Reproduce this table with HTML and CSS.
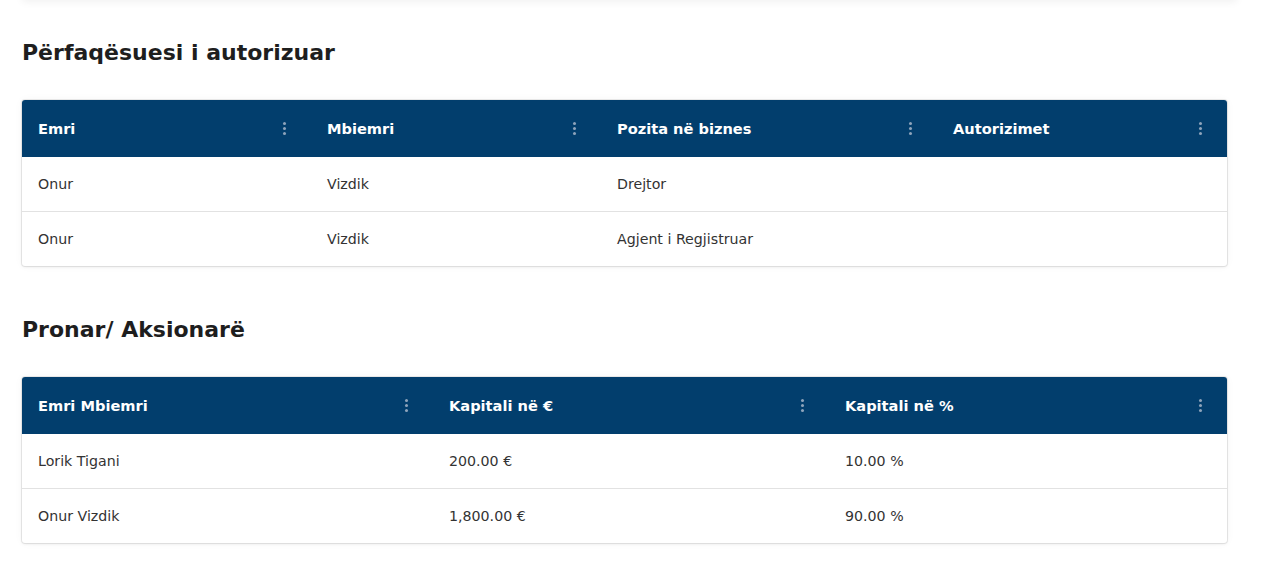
FILE: index.html
```html
<!DOCTYPE html>
<html lang="sq">
<head>
<meta charset="utf-8">
<title>Përfaqësuesi i autorizuar</title>
<link rel="stylesheet" href="styles.css">
</head>
<body>
<div class="page">
  <div class="prev-card"></div>

  <section class="section">
    <h2 class="section-title">Përfaqësuesi i autorizuar</h2>
    <div class="card">
      <div class="grid grid-reps head">
        <div class="cell th"><span>Emri</span><span class="dots"><i></i><i></i><i></i></span></div>
        <div class="cell th"><span>Mbiemri</span><span class="dots"><i></i><i></i><i></i></span></div>
        <div class="cell th"><span>Pozita në biznes</span><span class="dots"><i></i><i></i><i></i></span></div>
        <div class="cell th"><span>Autorizimet</span><span class="dots"><i></i><i></i><i></i></span></div>
      </div>
      <div class="grid grid-reps row">
        <div class="cell">Onur</div>
        <div class="cell">Vizdik</div>
        <div class="cell">Drejtor</div>
        <div class="cell"></div>
      </div>
      <div class="grid grid-reps row last">
        <div class="cell">Onur</div>
        <div class="cell">Vizdik</div>
        <div class="cell">Agjent i Regjistruar</div>
        <div class="cell"></div>
      </div>
    </div>
  </section>

  <section class="section second">
    <h2 class="section-title">Pronar/ Aksionarë</h2>
    <div class="card">
      <div class="grid grid-owners head">
        <div class="cell th"><span>Emri Mbiemri</span><span class="dots"><i></i><i></i><i></i></span></div>
        <div class="cell th"><span>Kapitali në €</span><span class="dots"><i></i><i></i><i></i></span></div>
        <div class="cell th"><span>Kapitali në %</span><span class="dots"><i></i><i></i><i></i></span></div>
      </div>
      <div class="grid grid-owners row">
        <div class="cell">Lorik Tigani</div>
        <div class="cell">200.00 €</div>
        <div class="cell">10.00 %</div>
      </div>
      <div class="grid grid-owners row last">
        <div class="cell">Onur Vizdik</div>
        <div class="cell">1,800.00 €</div>
        <div class="cell">90.00 %</div>
      </div>
    </div>
  </section>
</div>
</body>
</html>
```

FILE: styles.css
```css
* { box-sizing: border-box; }
html, body { margin: 0; padding: 0; background: #ffffff; }
body {
  font-family: "DejaVu Sans", "Open Sans", sans-serif;
  color: #333333;
  overflow: hidden;
}
.page {
  padding: 0 38px 40px 22px;
}
.prev-card {
  height: 40px;
  margin-top: -40px;
  margin-right: -10px;
  background: #fff;
  box-shadow: 0 2px 8px rgba(0, 0, 0, 0.06);
}
.section-title {
  margin: 0;
  font-size: 22px;
  font-weight: 700;
  color: #1e1e1e;
  line-height: 28px;
}
.section { padding-top: 39px; }
.section .section-title { margin-bottom: 33px; }
.section.second { padding-top: 50px; }
.second .section-title { margin-bottom: 33px; }
.card {
  background: #fff;
  border-radius: 3px;
  box-shadow: 0 0 0 1px rgba(0,0,0,0.07), 0 1px 3px rgba(0,0,0,0.08), 0 0 10px rgba(0,0,0,0.04);
  overflow: hidden;
}
.grid { display: grid; }
.grid-reps { grid-template-columns: 289px 290px 336px 1fr; }
.grid-owners { grid-template-columns: 411px 396px 1fr; }
.head {
  background: #023e6d;
  height: 57px;
}
.row {
  height: 55px;
  border-bottom: 1px solid #e2e2e2;
}
.row.last { border-bottom: none; height: 54px; }
.cell {
  display: flex;
  align-items: center;
  padding: 0 16px;
  font-size: 14.2px;
  color: #333;
}
.th {
  justify-content: space-between;
  color: #ffffff;
  font-weight: 700;
  font-size: 14.6px;
  padding-right: 25px;
}
.dots {
  display: flex;
  flex-direction: column;
  gap: 2px;
  width: 3px;
}
.dots i {
  display: block;
  width: 3px;
  height: 3px;
  border-radius: 50%;
  background: #8ea4bb;
}
```
